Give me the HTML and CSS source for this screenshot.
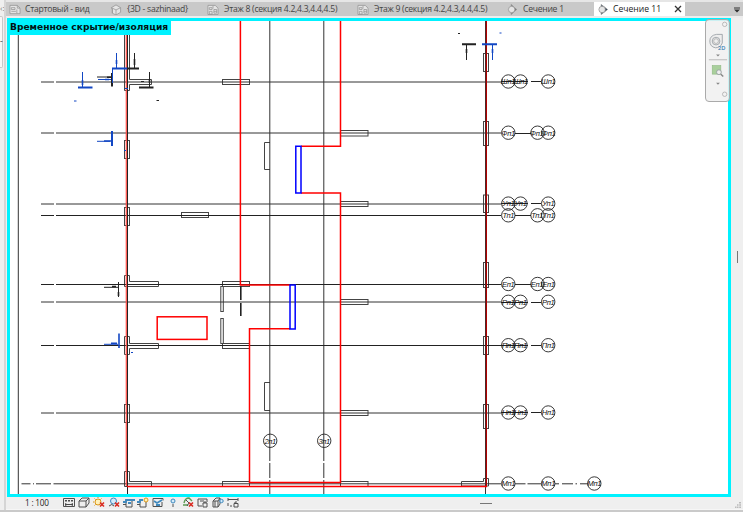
FILE: index.html
```html
<!DOCTYPE html>
<html lang="ru">

<head>
  <meta charset="utf-8">
  <title>Сечение 11</title>
  <link rel="stylesheet" href="styles.css">
</head>

<body>
  <div class="app">
    <div class="dock">
      <div class="dock-head">‹:</div>
      <div class="dock-panel">-</div>
    </div>

    <div class="window">
      <div class="tabs">
        <div class="tab tab-start">
          <svg class="tab-icon" viewBox="0 0 12 12"><path class="light" d="M.5 1.500h8l3 3v6H.5z" /><path d="M8.500 1.500v3h3M2 4h4v2H2zM2 8h5M8 6v4" /></svg>
          <span>Стартовый - вид</span>
        </div>
        <div class="tab tab-3d">
          <svg class="tab-icon" viewBox="0 0 12 12"><path class="light" d="M1 4l5-3 5 3v5l-5 3-4-2V6z" /><path d="M1 4l5 2.500L11 4M2 5v5M6 6.500V12" /></svg>
          <span>{3D - sazhinaad}</span>
        </div>
        <div class="tab tab-floor8">
          <svg class="tab-icon" viewBox="0 0 12 12"><path class="light" d="M.5 1.500h8l3 3v7H.5z" /><path d="M2 4h3v2H2zM2 8h3v3H2zM6 2v3M7 6h3v4H7zM7 8h3" /></svg>
          <span>Этаж 8 (секция 4.2,4.3,4.4,4.5)</span>
        </div>
        <div class="tab tab-floor9">
          <svg class="tab-icon" viewBox="0 0 12 12"><path class="light" d="M.5 1.500h8l3 3v7H.5z" /><path d="M2 4h3v2H2zM2 8h3v3H2zM6 2v3M7 6h3v4H7zM7 8h3" /></svg>
          <span>Этаж 9 (секция 4.2,4.3,4.4,4.5)</span>
        </div>
        <div class="tab tab-section">
          <svg class="tab-icon" viewBox="0 0 12 12"><path class="solid" d="M4 .5l6 5.500-6 5.500z" /><circle class="light" cx="4.500" cy="6" r="3.500" /></svg>
          <span>Сечение 1</span>
        </div>
        <div class="tab tab-active">
          <svg class="tab-icon" viewBox="0 0 12 12"><path class="solid" d="M4 .5l7 5.500-7 5.500z" /><circle class="light" cx="5" cy="6" r="3.500" /></svg>
          <span>Сечение 11</span>
          <svg class="tab-close" viewBox="0 0 8 8"><path d="M1 1l6 6M7 1L1 7" /></svg>
        </div>
        <svg class="tabs-menu" viewBox="0 0 6 6"><path d="M0 .5h6v1H0zM0 2.500h6L3 5.500z" /></svg>
      </div>

      <div class="workspace">
        <div class="view">
          <svg class="drawing" viewBox="10 21 718 473">
            <defs>
              <circle id="b" r="6.700" />
            </defs>

            <!-- walls -->
            <g class="wall">
              <path d="M124.500 35V90.500H129.500V84.500H151.500V79.500H129.500V35" />
              <rect x="124.500" y="140.500" width="5" height="18" />
              <rect x="124.500" y="207.500" width="5" height="18" />
              <path d="M124.500 275.500V286.500H158.500V281.500H129.500V275.500z" />
              <path d="M124.500 336.500V354.500H129.500V348.500H158.500V343.500H129.500V336.500z" />
              <rect x="124.500" y="404.500" width="5" height="18" />
              <path d="M124.500 471.500V486.500H151.500V481.500H129.500V471.500z" />
              <rect x="483.500" y="53.500" width="5" height="18" />
              <rect x="483.500" y="121.500" width="5" height="24" />
              <rect x="483.500" y="195" width="5" height="17.500" />
              <rect x="483.500" y="262.500" width="5" height="25" />
              <rect x="483.500" y="336.500" width="5" height="18" />
              <rect x="483.500" y="404.500" width="5" height="24" />
              <path d="M461.500 486V481.500H483.500V478.500H488.500V486z" />
              <rect x="222.500" y="79.500" width="27" height="5" />
              <rect x="181.500" y="212.500" width="27" height="5" />
              <rect x="222.500" y="281.500" width="27" height="5" />
              <rect x="222.500" y="343.500" width="27" height="5" />
              <rect x="222.500" y="481.500" width="27" height="5" />
              <rect x="340.500" y="130.500" width="27.500" height="5.500" />
              <rect x="340.500" y="201.500" width="27.500" height="5" />
              <rect x="340.500" y="299.500" width="27.500" height="5" />
              <rect x="340.500" y="410.500" width="27.500" height="5" />
              <rect x="340.500" y="481.500" width="27.500" height="5" />
              <rect x="220.800" y="286.500" width="2.500" height="25" />
              <rect x="220.800" y="318.500" width="2.500" height="25" />
              <path d="M270 142.500H264.500V169.500H270M270 382.500H264.500V410.500H270" />
            </g>

            <!-- grid lines -->
            <path class="axis" d="M18.300 21V494M41 82H54M56 82H501M41 133H54M56 133H501M41 204H54M56 204H501M41 302H54M56 302H501M41 413H54M56 413H501" />
            <path class="axis" d="M21.500 483.800H30.500M33 483.800h1M36 483.800H51M53.500 483.800H501M515 483.800h10.500M527.500 483.800H541M555 483.800h4M562 483.800h11M575.500 483.800h1.500M580 483.800h8" />
            <path class="axis" d="M269.800 21V461M269.800 463V478M269.800 480V494M323.800 21V461M323.800 463V478M323.800 480V494" />
            <path class="axis crisp" d="M41 215.500H54M56 215.500H501M41 284.500H54M56 284.500H501M41 345.500H54M56 345.500H501" />
            <path class="axis crisp" d="M501 81.500H528M531 81.500H541M501 203.500H528M531 203.500H541M501 302.500H528M531 302.500H541M501 345.500H528M531 345.500H541M501 412.500H528M531 412.500H541M515 133.500H531M515 215.500H531M515 284.500H531" />

            <!-- section boundary -->
            <path class="tint" d="M126.300 21V486" />
            <path class="axis crisp" d="M127.500 21V494" />
            <path class="axis" d="M485.500 21V494" />
            <path class="dark-red" d="M486.400 21V486" />
            <path class="red" d="M127 486.400H487M240.400 21V285H290M290 328.800H249.500V482.500H340.500V193H301M301 146.300H340.500V21" />
            <rect class="red" x="157.200" y="316.800" width="49.800" height="22.600" />
            <path class="blue" d="M295.800 146.300H301V193H295.800zM290 285H295.200V329H290z" />

            <!-- section markers -->
            <g class="mark">
              <path d="M134.500 53V68M149.500 72V87M97 77H112M118.500 282V297M104 287.300H118M466.500 45V60" />
              <path d="M156.500 100.500h2.500M458 33.500h2M141 81.500h3" />
              <path class="head" d="M134.500 59V65M107 77.300H112M112 286.500H116M118.500 292V296M466.500 49V53M149.500 79V83" />
              <path class="bar" d="M127 68.500H139M112 73V86.500M139 87.500H153.500M462 44.300H476" />
              <path class="head" d="M240.800 286V300M240.800 303V316" />
            </g>
            <g class="mark mark-blue">
              <path d="M116.500 53V68M112.500 68V83M82.500 72V87M98 79.500H111M97 141.300H110M104 344.300H118M492.500 45V60" />
              <path d="M74 101h2.500M131 352.500h2M499.500 33h2M124 150.500h2M125 88.500h3" />
              <path class="head" d="M116.500 60V64M105 79.500H109M82.500 80V85M104 141H111M111 343.300H117M492.500 49V53" />
              <path class="bar" d="M112 68.500H127M78 87.500H92.500M112 131V146M482 44.300H497" />
              <path class="head" d="M119 333.500V348" />
            </g>

            <!-- grid bubbles -->
            <g class="bubbles">
              <use href="#b" x="508.300" y="81.500" /><use href="#b" x="520.500" y="81.500" /><use href="#b" x="548.200" y="81.500" />
              <use href="#b" x="508.300" y="132.700" /><use href="#b" x="537.500" y="132.700" /><use href="#b" x="548.200" y="132.700" />
              <use href="#b" x="508.300" y="203.600" /><use href="#b" x="520.500" y="203.600" /><use href="#b" x="548.200" y="203.600" />
              <use href="#b" x="508.300" y="215.300" /><use href="#b" x="537.500" y="215.300" /><use href="#b" x="548.200" y="215.300" />
              <use href="#b" x="508.300" y="284" /><use href="#b" x="537.500" y="284" /><use href="#b" x="548.200" y="284" />
              <use href="#b" x="508.300" y="301.800" /><use href="#b" x="520.500" y="301.800" /><use href="#b" x="548.200" y="301.800" />
              <use href="#b" x="508.300" y="345.200" /><use href="#b" x="520.500" y="345.200" /><use href="#b" x="548.200" y="345.200" />
              <use href="#b" x="508.300" y="412.500" /><use href="#b" x="520.500" y="412.500" /><use href="#b" x="548.200" y="412.500" />
              <use href="#b" x="508.300" y="483.500" /><use href="#b" x="548.200" y="483.500" /><use href="#b" x="594.300" y="483.500" />
              <use href="#b" x="270.200" y="440.800" /><use href="#b" x="324.200" y="440.800" />
            </g>
            <g class="labels">
              <text x="508" y="84.300">Шп1</text><text x="520.800" y="84.300">Шп1</text><text x="548.200" y="84.300">Шп1</text>
              <text x="508.300" y="135.500">Фп1</text><text x="536.800" y="135.500">Фп1</text><text x="548.700" y="135.500">Фп1</text>
              <text x="508.300" y="206.400">Уп1</text><text x="520.500" y="206.400">Уп1</text><text x="548.200" y="206.400">Уп1</text>
              <text x="508.300" y="218.100">Тп1</text><text x="537" y="218.100">Тп1</text><text x="548.500" y="218.100">Тп1</text>
              <text x="508.300" y="286.800">Еп1</text><text x="537" y="286.800">Еп1</text><text x="548.500" y="286.800">Еп1</text>
              <text x="508.300" y="304.600">Рп1</text><text x="520.500" y="304.600">Рп1</text><text x="548.200" y="304.600">Рп1</text>
              <text x="508.300" y="348">Пп1</text><text x="520.500" y="348">Пп1</text><text x="548.200" y="348">Пп1</text>
              <text x="508.300" y="415.300">Нп1</text><text x="520.500" y="415.300">Нп1</text><text x="548.200" y="415.300">Нп1</text>
              <text x="508.300" y="486.300">Мп1</text><text x="548.200" y="486.300">Мп1</text><text x="594.300" y="486.300">Мп1</text>
              <text x="270.200" y="443.600">2п1</text><text x="324.200" y="443.600">3п1</text>
            </g>
          </svg>
          <div class="view-label">Временное скрытие/изоляция</div>
          <div class="navbar">
            <svg viewBox="0 0 24 82">
              <circle class="nav-line" cx="19.500" cy="4.500" r="2.300" />
              <path class="nav-shape" d="M11 15h6v9q-2 5-7 5-6-1-6-7t7-7z" />
              <circle class="nav-shape" cx="10.500" cy="22" r="4" />
              <circle class="nav-line" cx="10.500" cy="22" r="2.500" />
              <text x="12.500" y="31.500">2D</text>
              <path class="nav-arrow" d="M10.500 36h4l-2 2zM10.500 65.500h4l-2 2z" />
              <path class="nav-line" d="M3 41.500H22" />
              <rect class="nav-green" x="6.500" y="47.500" width="9" height="9" />
              <circle class="nav-shape" cx="13.500" cy="54.500" r="2.500" />
              <path class="nav-glass" d="M15.500 56.500l2.500 2.500" />
              <circle class="nav-line" cx="19.500" cy="77.500" r="2.300" />
            </svg>
          </div>
        </div>
        <div class="gutter"></div>
      </div>

      <div class="status">
        <span class="scale">1 : 100</span>
        <div class="status-tools">
          <svg viewBox="0 0 12 11"><path class="ink cut" d="M.5 1.500h11v8H.5z" /><path class="fill" d="M2 3h2v1.500H2zM5 3h2v1.500H5zM8 3h2v1.500H8zM2 6l2 1h4l2-1v3l-2-1H4L2 9z" /></svg>
          <svg viewBox="0 0 12 11"><path class="ink" d="M1 4l3-3h7v5L8 10H1zM1 4h7l3-3M8 4v6" /></svg>
          <svg viewBox="0 0 12 11"><circle class="sun" cx="5" cy="5" r="3" /><path class="sun" d="M5 0v1M0 5h1M1.500 1.500l1 1M8.500 1.500l-1 1M1.500 8.500l1-1" /><path class="cross" d="M7 5.500l4 4M11 5.500l-4 4" /></svg>
          <svg viewBox="0 0 12 11"><circle class="sky" cx="5.500" cy="4" r="3" /><path class="ink" d="M1 9q3-3 5 0" /><path class="cross" d="M7 5.500l4 4M11 5.500l-4 4" /></svg>
          <svg viewBox="0 0 12 11"><path class="ink" d="M3 3v7h6M0 7.500h3M9 2v8" /><path class="sky thick" d="M0 5h3V3h9M5 6h3" /></svg>
          <svg viewBox="0 0 12 11"><path class="ink" d="M3 3v7h6M0 7.500h3M9 5v5" /><path class="sky thick" d="M0 5h3V3h3" /><circle class="sun" cx="9" cy="3" r="2" /></svg>
          <svg viewBox="0 0 12 11"><path class="ink" d="M1 1.500h10v2M1 9.500h9V5M1 1.500v8" /><path class="sky thick" d="M2 4l3 2 5-3M4 8h4" /></svg>
          <svg viewBox="0 0 12 11"><circle class="sky" cx="6" cy="4" r="2" /><path class="ink" d="M6 7v3" /></svg>
          <svg viewBox="0 0 12 11"><path class="green" d="M2 6q1-5 5-5l3 3M1 8h5" /><path class="ink" d="M4 3l3 3-2 3" /><path class="cross" d="M7 5.500l4 4M11 5.500l-4 4" /></svg>
          <svg viewBox="0 0 12 11"><path class="ink" d="M1 2h9v3M1 2v7h4M3 4h4M6 6h4v4H6zM7 6V5h2v1" /></svg>
          <svg viewBox="0 0 12 11"><path class="ink" d="M1 4l3-3h4v6l-2 3H1zM1 4h5v6M3 4v6M6 4l2-3" /><circle class="sky" cx="9.500" cy="4" r="1.700" /></svg>
          <svg viewBox="0 0 12 11"><path class="ink" d="M1 1v3M1 2.500h10M11 1v3M1 6v3M3 9h2M7 6.500h4V10H7zM8 6.500V5h2" /></svg>
        </div>
        <div class="scroll-mark"></div>
        <svg class="grip" viewBox="0 0 6 6"><path d="M4 0h2v1.500H4zM2 2.200h1.500v1.500H2zM4.200 2.200H6v1.500H4.200zM0 4.400h1.500V6H0zM2 4.400h1.500V6H2zM4.200 4.400H6V6H4.200z" /></svg>
      </div>
    </div>
  </div>
</body>

</html>
```
FILE: styles.css
```css
* {
  box-sizing: border-box;
}

body {
  width: 743px;
  height: 512px;
  margin: 0;
  overflow: hidden;
  background: #efefef;
  font-family: "Open Sans", "Noto Sans", sans-serif;
  font-size: 8.6px;
  color: #444;
}

svg {
  display: block;
  fill: none;
}

.app {
  display: flex;
  height: 512px;
  border-bottom: 2px solid #cacaca;
}

.dock {
  width: 6px;
  border-right: 2px solid #d5d5d5;
  overflow: hidden;
}

.dock-head {
  height: 16px;
  line-height: 15px;
  font-size: 8px;
  color: #777;
}

.dock-panel {
  width: 3px;
  height: 52px;
  border: 1px solid #c8c8c8;
  border-left: 0;
  border-radius: 0 2px 2px 0;
  background: #f7f7f7;
  line-height: 48px;
}

.window {
  flex: 1;
  display: flex;
  flex-direction: column;
}

/* tabs */

.tabs {
  display: flex;
  height: 18px;
  border-top: 2px solid #e6e6e6;
  border-bottom: 2px solid #ededed;
  background: #c9c9c9;
}

.tab {
  display: flex;
  align-items: center;
  gap: 4px;
  padding-left: 3px;
  white-space: nowrap;
  line-height: 14px;
  letter-spacing: -.26px;
}

.tab-icon {
  flex: none;
  width: 12px;
  height: 11px;
  stroke: #929292;
  stroke-width: .8;
}

.tab-icon .light {
  fill: #e4e4e4;
}

.tab-icon .solid {
  fill: #777;
}

.tab-start {
  width: 101px;
}

.tab-3d {
  width: 97px;
  gap: 5px;
}

.tab-floor8,
.tab-floor9 {
  width: 150px;
  gap: 5px;
}

.tab-section {
  width: 90px;
}

.tab-active {
  width: 91px;
  background: #fff;
  color: #222;
  letter-spacing: 0;
}

.tab-active .solid {
  fill: #26384c;
}

.tab-close {
  width: 8px;
  height: 8px;
  margin: 0 3px 0 auto;
  stroke: #333;
  stroke-width: 1.3;
}

.tabs-menu {
  width: 6px;
  height: 6px;
  margin: 5px 3px 0 auto;
  fill: #333;
}

/* view */

.workspace {
  flex: 1;
  display: flex;
  min-height: 0;
  padding-left: 1px;
}

.view {
  position: relative;
  width: 724px;
  height: 479px;
  border: 3px solid #00f2ff;
  background: #fff;
}

.drawing {
  width: 718px;
  height: 473px;
}

.view-label {
  position: absolute;
  left: -3px;
  top: -3px;
  width: 164px;
  height: 17px;
  padding-left: 3px;
  background: #00f2ff;
  color: #001414;
  font-family: "DejaVu Sans", sans-serif;
  font-size: 9.1px;
  font-weight: 700;
  line-height: 18px;
  white-space: nowrap;
}

.axis {
  stroke: #333;
}

.axis.crisp {
  stroke: #222;
}

.wall {
  stroke: #444;
}

.tint {
  stroke: #ff4a42;
  stroke-width: 1.2;
}

.red {
  stroke: #f00;
  stroke-width: 1.5;
}

.dark-red {
  stroke: #b00000;
  stroke-width: 1.2;
}

.blue {
  stroke: #00f;
  stroke-width: 1.5;
}

.mark {
  stroke: #222;
}

.mark-blue {
  stroke: #1247c4;
}

.mark .head {
  stroke-width: 1.6;
}

.mark .bar {
  stroke-width: 2;
}

.bubbles {
  stroke: #222;
  stroke-width: .9;
}

.labels {
  fill: #111;
  font-family: "Liberation Sans", Arial, sans-serif;
  font-size: 7.5px;
  font-style: italic;
  letter-spacing: -.3px;
  text-anchor: middle;
}

.navbar {
  position: absolute;
  right: -2px;
  top: -2px;
  width: 25px;
  height: 83px;
  border: 1px solid #aaa;
  border-radius: 4px;
  background: rgba(240, 240, 240, .85);
}

.nav-line {
  stroke: #aaa;
  stroke-width: .8;
}

.nav-shape {
  fill: #eee;
  stroke: #8e959b;
  stroke-width: .8;
}

.nav-green {
  fill: #a9cf9c;
  stroke: #8eb982;
  stroke-width: .6;
}

.nav-glass {
  stroke: #888;
  stroke-width: 1.5;
}

.nav-arrow {
  fill: #888;
}

.navbar text {
  fill: #3b80b5;
  font-size: 6px;
  font-weight: 600;
}

.gutter {
  width: 2px;
  height: 12px;
  margin: 233px 0 0 5px;
  border: solid #777;
  border-width: 0 1px 0 0;
}

/* view control bar */

.status {
  display: flex;
  align-items: center;
  height: 13px;
  border-bottom: 1px solid #f6f6f6;
}

.scale {
  width: 57px;
  padding-left: 19px;
  font-size: 8.2px;
  line-height: 12px;
  letter-spacing: -.2px;
  color: #222;
  white-space: nowrap;
}

.status-tools {
  display: flex;
  gap: 2.9px;
  margin-top: -1px;
}

.status-tools svg {
  width: 12px;
  height: 11px;
}

.status-tools .ink {
  stroke: #505050;
}

.status-tools .fill {
  fill: #4b4b4b;
}

.status-tools .cut {
  fill: #eee;
}

.status-tools .sky {
  fill: #d4ebfb;
  stroke: #3f88bd;
}

.status-tools .thick {
  fill: none;
  stroke-width: 1.8;
}

.status-tools .sun {
  fill: #fff1ba;
  stroke: #d99518;
}

.status-tools .green {
  stroke: #5c9c54;
  stroke-width: 1.4;
}

.status-tools .cross {
  stroke: #d92a20;
  stroke-width: 1.6;
}

.scroll-mark {
  width: 12px;
  height: 1px;
  margin-left: 241px;
  background: #777;
}

.grip {
  width: 6px;
  height: 6px;
  margin: 3px 2px 0 auto;
  fill: #bbb;
}
```
